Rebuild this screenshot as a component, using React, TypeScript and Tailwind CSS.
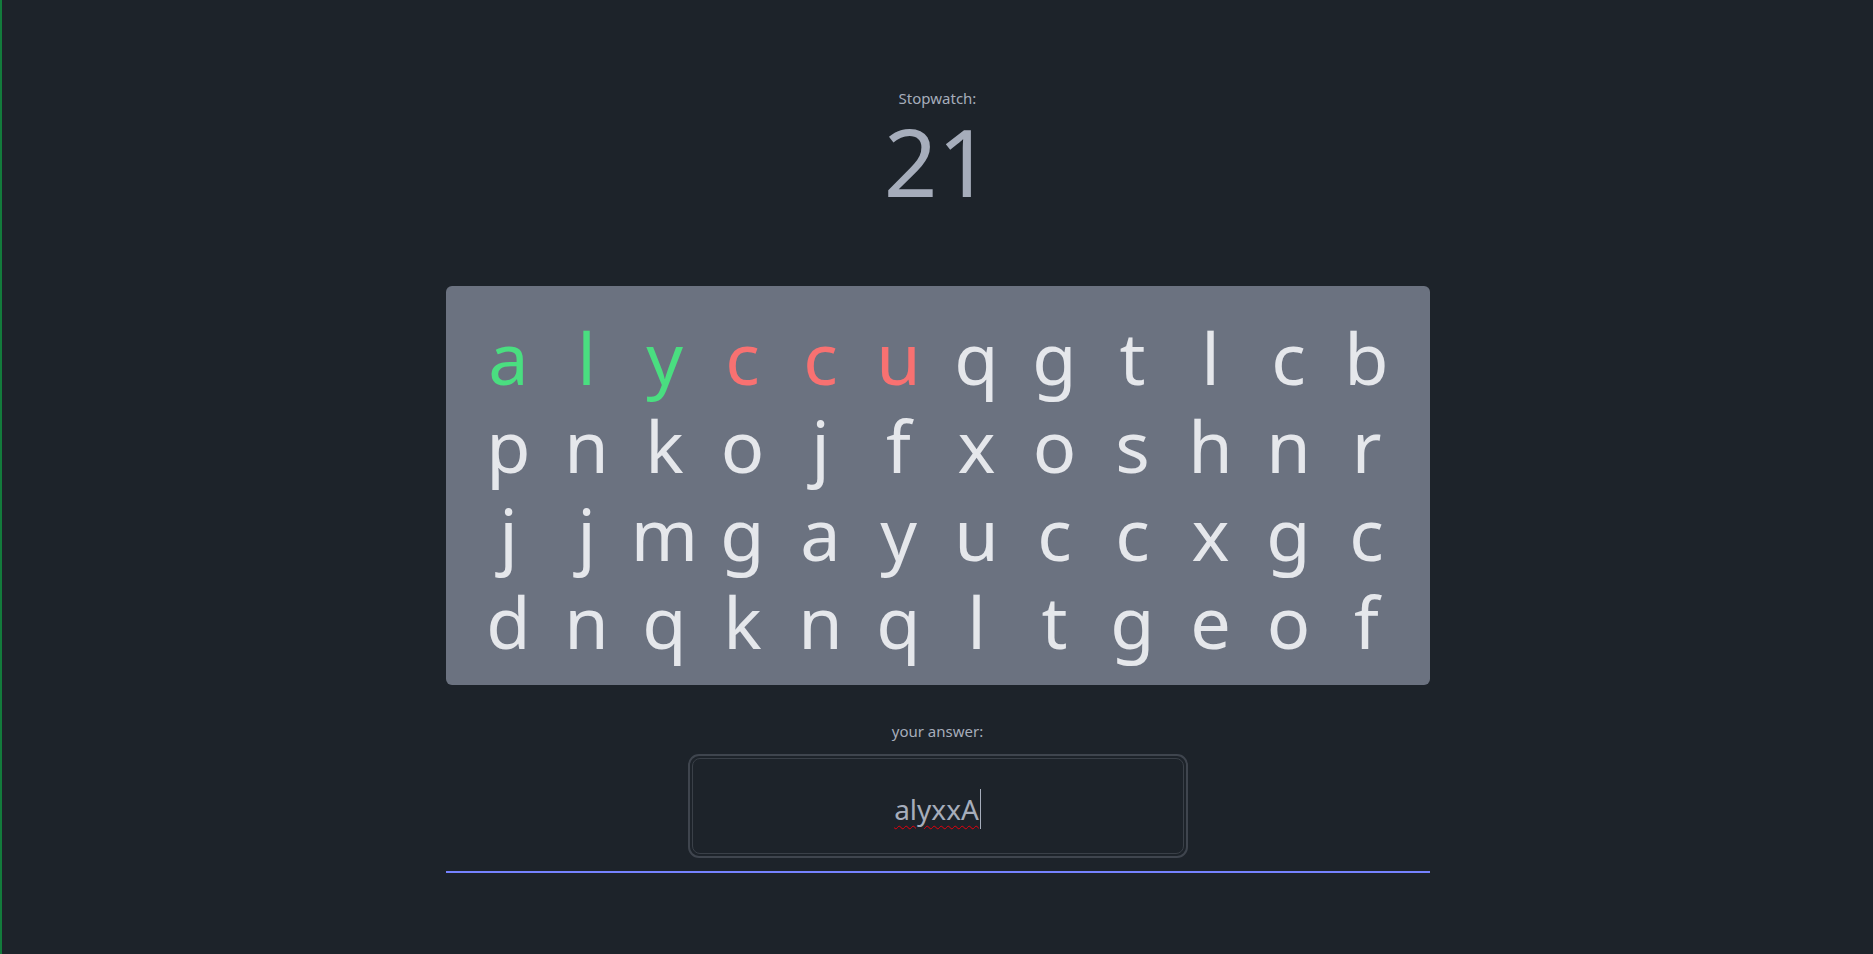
import React from "react";

const rows = [
  "alyccuqgtlcb",
  "pnkojfxoshnr",
  "jjmgayuccxgc",
  "dnqknqltgeof",
];

// first row: typed letters are marked right (green) or wrong (red)
function letterColor(row: number, col: number) {
  if (row !== 0) return "text-[#e5e7eb]";
  if (col < 3) return "text-[#4ade80]";
  if (col < 6) return "text-[#f87171]";
  return "text-[#e5e7eb]";
}

function LetterGrid() {
  return (
    <div className="w-[984px] rounded-md bg-[#6b7280] px-6 pt-[27px] pb-[20px]">
      {rows.map((row, r) => (
        <div key={r} className="grid grid-cols-12">
          {row.split("").map((ch, c) => (
            <span
              key={c}
              className={`text-center text-[72px] leading-[88px] ${letterColor(r, c)}`}
            >
              {ch}
            </span>
          ))}
        </div>
      ))}
    </div>
  );
}

function AnswerBox({ value }: { value: string }) {
  return (
    <div className="rounded-[11px] border-2 border-[#3f454e] p-[2px]">
      <div className="flex h-[96px] w-[492px] items-center justify-center rounded-lg border border-[#3a4048] bg-[#1d232a] pt-[6px]">
        <span className="text-[28px] leading-[40px] text-[#a6adbb] underline decoration-wavy decoration-red-600 decoration-1 underline-offset-[5px]">
          {value}
        </span>
        <span className="ml-px h-[40px] w-px bg-[#a6adbb]" />
      </div>
    </div>
  );
}

export default function App() {
  return (
    <div
      className="flex min-h-screen flex-col items-center border-l-2 border-[#137b3c] bg-[#1d232a] pt-[88px]"
      style={{ fontFamily: '"Noto Sans", "Open Sans", sans-serif' }}
    >
      <p className="text-[15px] leading-5 text-[#a6adbb]">Stopwatch:</p>
      <p className="mt-[5px] text-[94px] leading-[96px] text-[#a6adbb]">21</p>

      <div className="mt-[77px]">
        <LetterGrid />
      </div>

      <p className="mt-[36px] text-[15px] leading-5 text-[#a6adbb]">your answer:</p>
      <div className="mt-[13px]">
        <AnswerBox value="alyxxA" />
      </div>
      <div className="mt-[13px] h-[2px] w-[984px] bg-[#7582ff]" />
    </div>
  );
}
